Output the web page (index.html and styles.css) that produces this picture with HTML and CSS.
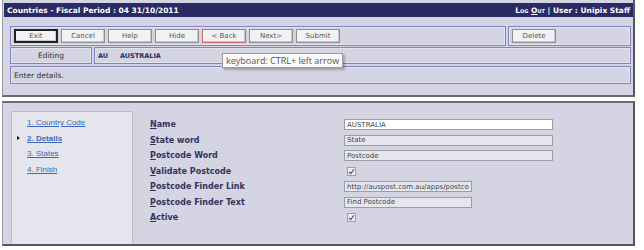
FILE: index.html
```html
<!DOCTYPE html>
<html lang="en">
<head>
    <meta charset="UTF-8">
    <title>Countries - Details</title>
    <link rel="stylesheet" href="styles.css">
</head>
<body>

    <div class="frame">
        <!-- Header, toolbar and status -->
        <div class="top-panel">
            <div class="titlebar">
                <span class="title">Countries - Fiscal Period : 04 31/10/2011</span>
                <span class="user"><span class="logout">Log <u>O</u>ut</span> | User : Unipix Staff</span>
            </div>

            <div class="toolbar">
                <div class="group main-buttons">
                    <button class="btn default">Exit</button>
                    <button class="btn">Cancel</button>
                    <button class="btn">Help</button>
                    <button class="btn">Hide</button>
                    <button class="btn hover">&lt; Back</button>
                    <button class="btn">Next&gt;</button>
                    <button class="btn">Submit</button>
                </div>
                <div class="group side-buttons">
                    <button class="btn">Delete</button>
                </div>
            </div>

            <div class="status-row">
                <div class="cell mode">Editing</div>
                <div class="cell record"><span class="code">AU</span><span>AUSTRALIA</span></div>
            </div>
            <div class="cell message">Enter details.</div>

            <div class="tooltip">keyboard: CTRL+ left arrow</div>
        </div>

        <!-- Wizard steps and form -->
        <div class="bottom-panel">
            <ul class="steps">
                <li><a href="#">1. Country Code</a></li>
                <li class="current"><a href="#">2. Details</a></li>
                <li><a href="#">3. States</a></li>
                <li><a href="#">4. Finish</a></li>
            </ul>

            <div class="form">
                <div class="form-row">
                    <label><u>N</u>ame</label>
                    <input class="field wide editable" type="text" value="AUSTRALIA">
                </div>
                <div class="form-row">
                    <label><u>S</u>tate word</label>
                    <input class="field wide" type="text" value="State">
                </div>
                <div class="form-row">
                    <label><u>P</u>ostcode Word</label>
                    <input class="field wide" type="text" value="Postcode">
                </div>
                <div class="form-row">
                    <label><u>V</u>alidate Postcode</label>
                    <span class="check"><svg width="7" height="7" viewBox="0 0 7 7"><path d="M1 3.8 L2.8 5.6 L6 1.2" fill="none" stroke="#4a4a70" stroke-width="1.1"/></svg></span>
                </div>
                <div class="form-row">
                    <label><u>P</u>ostcode Finder Link</label>
                    <input class="field short" type="text" value="http://auspost.com.au/apps/postcode.nsf">
                </div>
                <div class="form-row">
                    <label><u>P</u>ostcode Finder Text</label>
                    <input class="field short" type="text" value="Find Postcode">
                </div>
                <div class="form-row">
                    <label><u>A</u>ctive</label>
                    <span class="check"><svg width="7" height="7" viewBox="0 0 7 7"><path d="M1 3.8 L2.8 5.6 L6 1.2" fill="none" stroke="#4a4a70" stroke-width="1.1"/></svg></span>
                </div>
            </div>
        </div>
    </div>

</body>
</html>
```

FILE: styles.css
```css
* {
    box-sizing: border-box;
}

body {
    margin: 0;
    background-color: #fff;
    font-family: "DejaVu Sans", Verdana, sans-serif;
    font-size: 7px;
    color: #333;
}

.frame {
    width: 633px;
    margin-left: 2px;
}

/* --- Top panel --- */
.top-panel {
    position: relative;
    height: 97px;
    padding-top: 3px;
    background-color: #d4d4e2;
    border-left: 1px solid #9a9aa6;
    border-right: 2px solid #55555f;
    border-bottom: 2px solid #6a6a74;
}

.titlebar {
    display: flex;
    justify-content: space-between;
    align-items: center;
    height: 14px;
    margin-left: 1px;
    padding: 0 3px;
    background-color: #2a2a64;
    color: #fff;
    font-weight: bold;
    font-size: 7.5px;
}

.logout {
    font-variant: small-caps;
}

.toolbar {
    display: flex;
    gap: 2px;
    margin: 9px 2px 0 7px;
}

.group {
    display: flex;
    gap: 3px;
    height: 20px;
    padding: 2px 3px;
    border: 1px solid #8282c4;
    box-shadow: inset 0 0 0 1px #e2e2ee;
}
.main-buttons {
    width: 496px;
}
.side-buttons {
    flex: 1;
}

.btn {
    width: 44px;
    height: 14px;
    padding: 0;
    font-family: "DejaVu Sans", Verdana, sans-serif;
    font-size: 7px;
    color: #555;
    background-color: #f2f2f4;
    border: 1px solid #8e8e96;
    box-shadow: inset -1px -1px 0 #c8c8cc;
}
.btn.default {
    border: 2px solid #222;
}
.btn.hover {
    border-color: #d06a6a;
}

.status-row {
    display: flex;
    gap: 2px;
    margin: 1px 2px 0 7px;
}

.cell {
    display: flex;
    align-items: center;
    height: 17px;
    border: 1px solid #8282c4;
    box-shadow: inset 0 0 0 1px #e2e2ee;
    padding: 0 3px;
    font-size: 7.5px;
}
.mode {
    width: 82px;
    justify-content: center;
}
.record {
    flex: 1;
    font-weight: bold;
    font-size: 6.5px;
    color: #2a2a55;
}
.record .code {
    width: 22px;
}
.message {
    height: 18px;
    margin: 2px 2px 0 7px;
}

.tooltip {
    position: absolute;
    left: 219px;
    top: 53px;
    padding: 1px 3px;
    height: 15px;
    background-color: #fafafa;
    border: 1px solid #9a9a9a;
    box-shadow: 2px 2px 2px rgba(0, 0, 0, 0.25);
    font-family: "Open Sans", sans-serif;
    font-size: 9px;
    line-height: 12px;
    color: #555;
    white-space: nowrap;
}

/* --- Bottom panel --- */
.bottom-panel {
    display: flex;
    height: 145px;
    margin-top: 4px;
    background-color: #d4d4e2;
    border-top: 2px solid #6a6a74;
    border-left: 1px solid #9a9aa6;
    border-right: 2px solid #55555f;
    border-bottom: 2px solid #55555f;
}

.steps {
    list-style: none;
    width: 122px;
    margin: 8px 0 0 8px;
    padding: 3px 0 0 15px;
    background-color: #e5e5ee;
    border: 1px solid #bdbdc8;
    border-bottom: none;
    font-family: "Liberation Sans", Arial, sans-serif;
    font-size: 8px;
    line-height: 15.5px;
}
.steps a {
    color: #3a6ab8;
}
.steps .current {
    position: relative;
    font-weight: bold;
}
.steps .current::before {
    content: "";
    position: absolute;
    left: -10px;
    top: 5px;
    border-left: 3px solid #111;
    border-top: 2.5px solid transparent;
    border-bottom: 2.5px solid transparent;
}

.form {
    margin: 14px 0 0 17px;
}
.form-row {
    display: flex;
    align-items: center;
    height: 15.5px;
}
.form-row label {
    width: 194px;
    font-weight: bold;
    font-size: 8px;
    color: #33335e;
}

.field {
    height: 11px;
    padding: 0 2px;
    font-family: "DejaVu Sans", Verdana, sans-serif;
    font-size: 7px;
    color: #444;
    background-color: #e6e6ee;
    border: 1px solid #9c9ca4;
}
.field.editable {
    background-color: #fff;
}
.field.wide {
    width: 209px;
}
.field.short {
    width: 128px;
}

.check {
    display: flex;
    align-items: center;
    justify-content: center;
    width: 9px;
    height: 9px;
    margin-left: 3px;
    background-color: #ececf2;
    border: 1px solid #9c9ca4;
}
```
